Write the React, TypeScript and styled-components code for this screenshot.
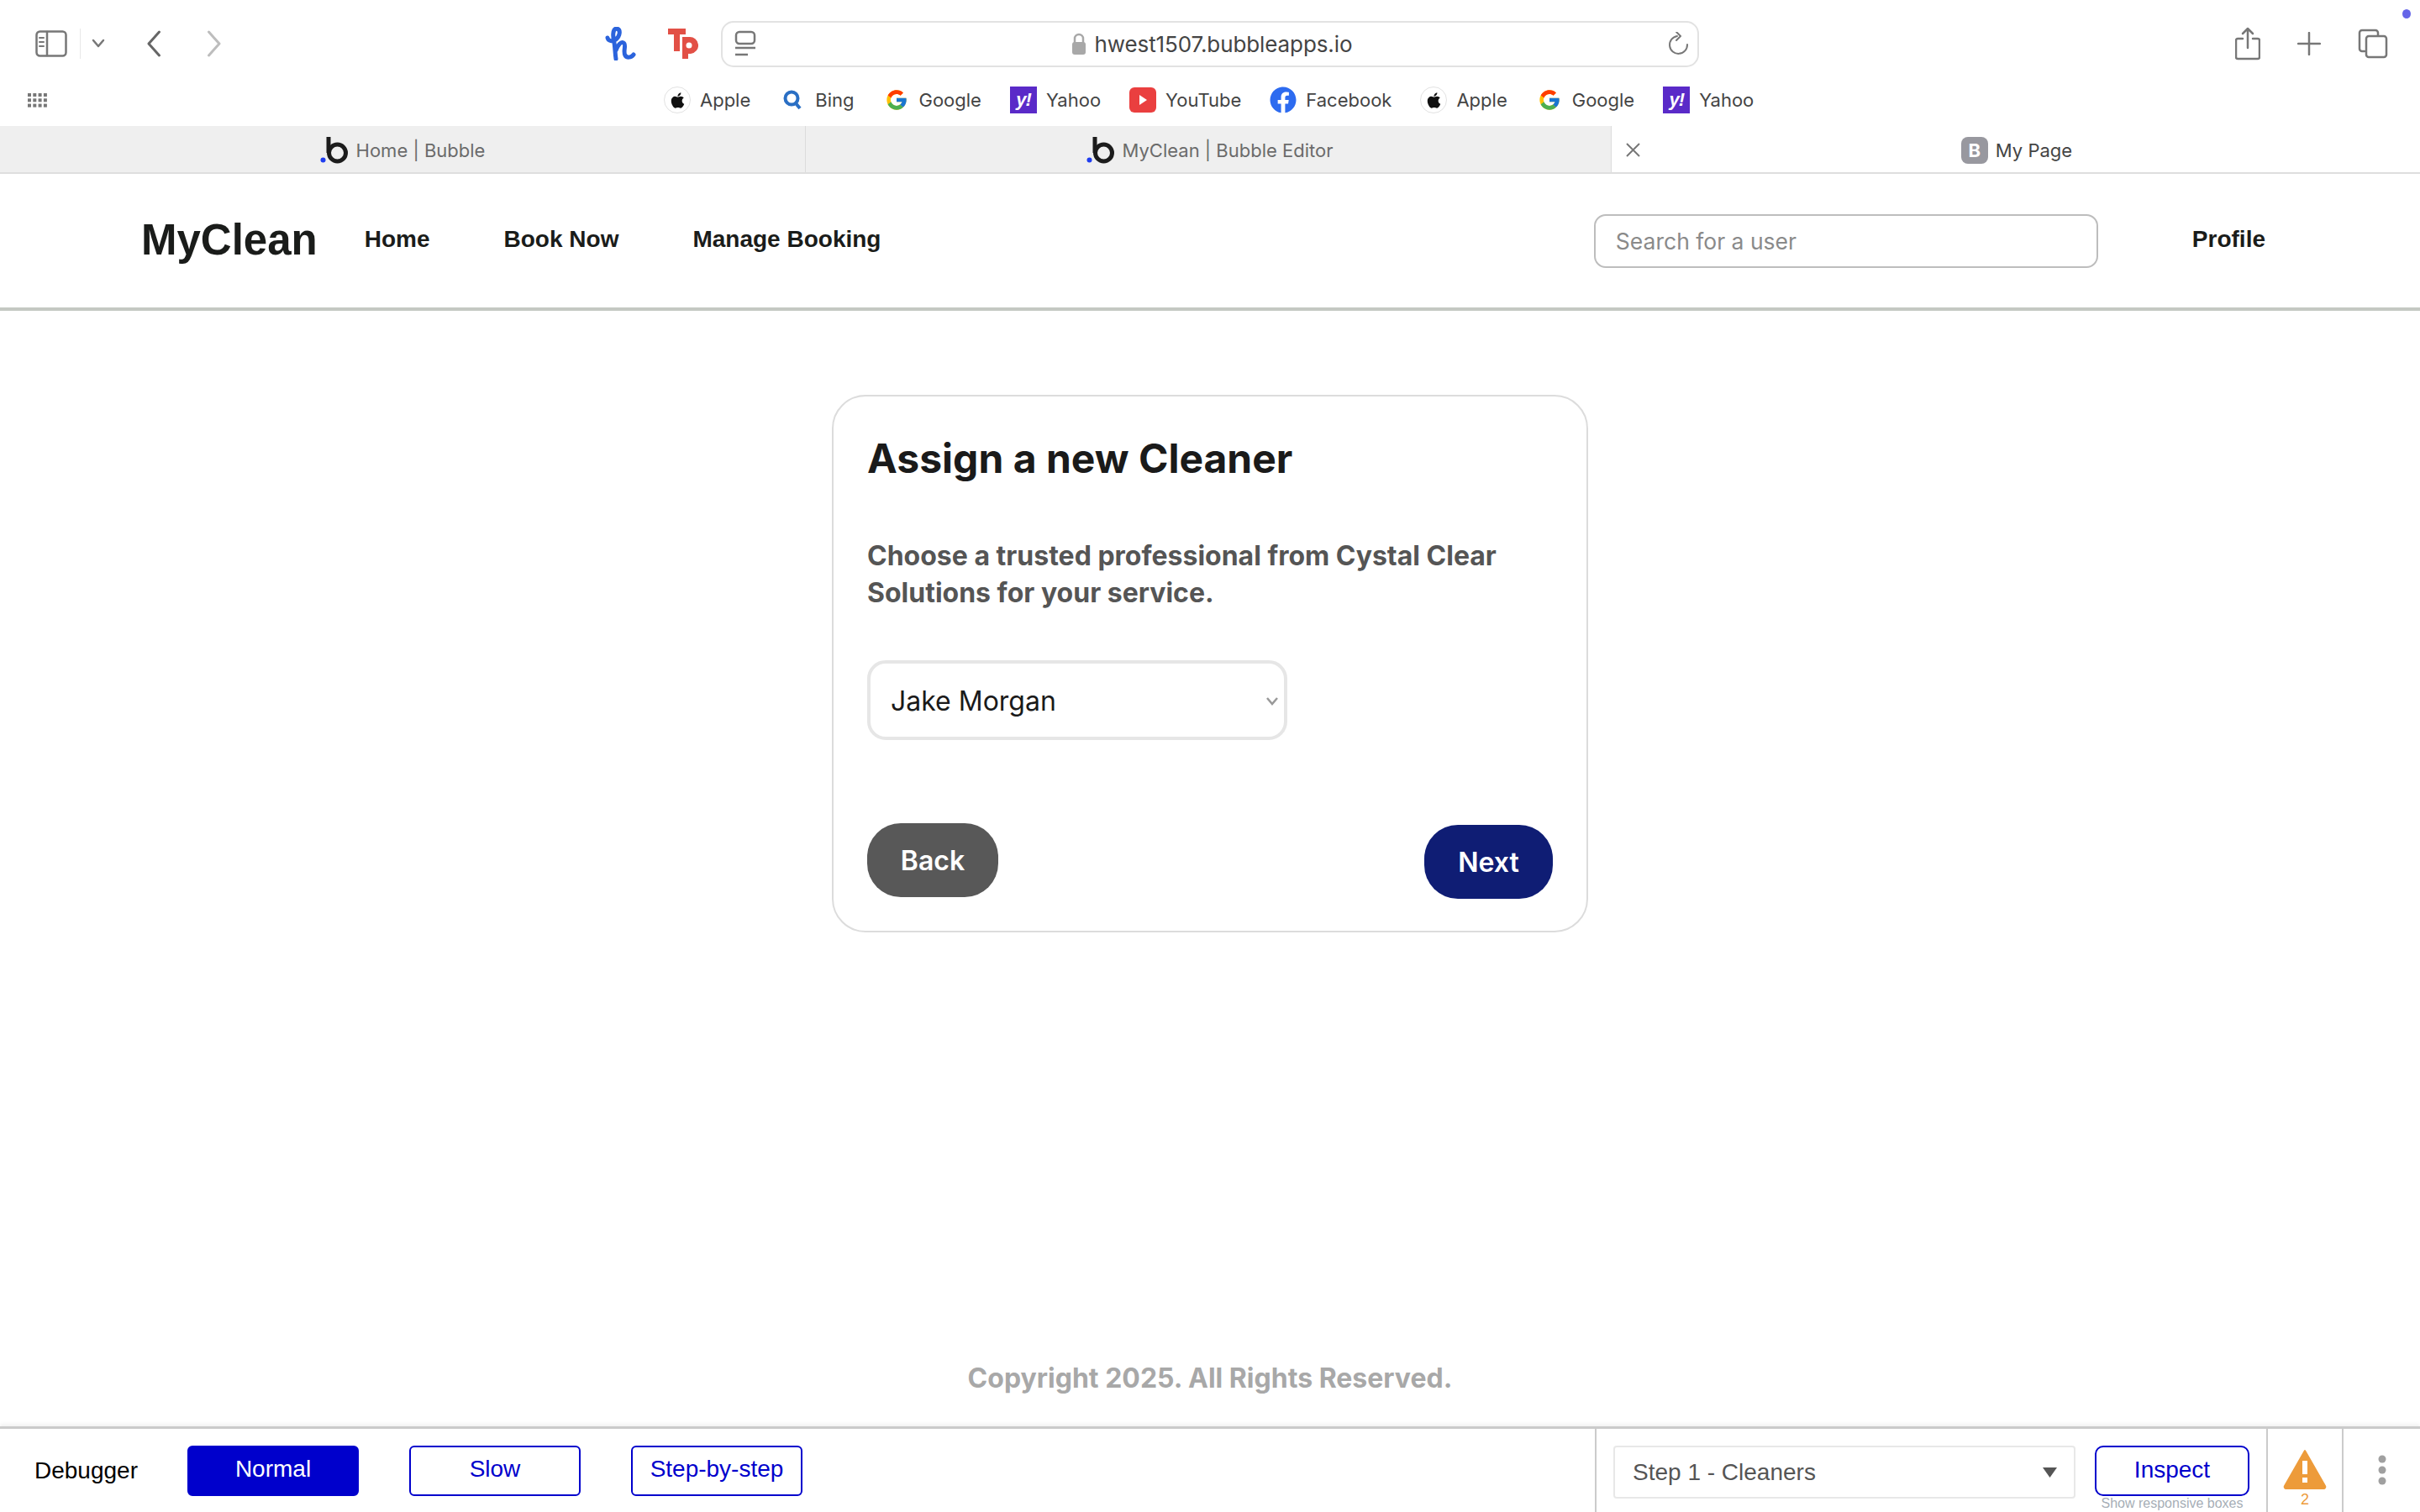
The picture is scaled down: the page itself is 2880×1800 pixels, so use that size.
import React from "react";
import styled, { createGlobalStyle } from "styled-components";
import { FaApple, FaFacebook } from "react-icons/fa";
import { FcGoogle } from "react-icons/fc";

const Global = createGlobalStyle`
  html, body { margin: 0; padding: 0; background: #fff; }
  * { box-sizing: border-box; }
`;

const Page = styled.div`
  position: relative;
  width: 2880px;
  height: 1800px;
  display: flex;
  flex-direction: column;
  overflow: hidden;
  background: #fff;
  font-family: Inter, "Liberation Sans", sans-serif;
`;

const Toolbar = styled.div`
  height: 104px;
  display: flex;
  align-items: center;
  padding-left: 42px;
`;
const NavGroup = styled.div`
  width: 660px;
  display: flex;
  align-items: center;
`;
const Divider = styled.span`
  width: 1px;
  height: 36px;
  background: #e8e8e8;
  margin: 0 13px 0 15px;
`;
const BackArrow = styled.svg`
  margin-left: 49px;
`;
const ForwardArrow = styled.svg`
  margin-left: 54px;
`;
const ExtGroup = styled.div`
  width: 138px;
  margin-left: 18px;
  display: flex;
  align-items: center;
  gap: 37px;
`;
const UrlBar = styled.div`
  width: 1164px;
  height: 55px;
  border: 2px solid #e2e2e2;
  border-radius: 15px;
  display: flex;
  align-items: center;
  justify-content: space-between;
  padding: 0 10px 0 14px;
`;
const UrlCenter = styled.div`
  display: flex;
  align-items: center;
  gap: 10px;
  font-size: 26px;
  color: #444;
  letter-spacing: -0.1px;
`;
const RightTools = styled.div`
  flex: 1;
  display: flex;
  justify-content: flex-end;
  align-items: center;
  gap: 44px;
  padding-right: 38px;
`;
const Dot = styled.span`
  position: absolute;
  left: 2859px;
  top: 11px;
  width: 10px;
  height: 11px;
  border-radius: 50%;
  background: #6565e8;
`;

const BookmarkRow = styled.div`
  height: 46px;
  padding: 0 0 16px 32px;
  display: flex;
  align-items: center;
`;
const Bookmarks = styled.div`
  margin-left: 732px;
  display: flex;
  align-items: center;
  gap: 34px;
`;
const Bookmark = styled.div`
  display: flex;
  align-items: center;
  gap: 11px;
  font-size: 22px;
  color: #444;
`;
const FavBox = styled.span`
  width: 32px;
  height: 32px;
  display: flex;
  align-items: center;
  justify-content: center;
`;
const AppleBadge = styled(FavBox)`
  border: 1px solid #e2e2e2;
  border-radius: 50%;
  color: #111;
  font-size: 21px;
`;
const YahooBadge = styled(FavBox)`
  background: #5a2ac8;
  color: #fff;
  font: italic 700 22px "Liberation Sans", sans-serif;
  letter-spacing: -1px;
`;

const Tabs = styled.div`
  height: 57px;
  display: grid;
  grid-template-columns: 959px 959px 1fr;
  border-bottom: 2px solid #dedede;
  box-shadow: inset 0 2px 2px -1px #d8d8d8;
`;
const Tab = styled.div<{ $active?: boolean }>`
  position: relative;
  display: flex;
  align-items: center;
  justify-content: center;
  gap: 9px;
  padding-top: 2px;
  font-size: 22px;
  color: ${(p) => (p.$active ? "#444" : "#6b6b6b")};
  background: ${(p) => (p.$active ? "#fff" : "#efefef")};
  border-right: 1px solid ${(p) => (p.$active ? "transparent" : "#dcdcdc")};
  & + & {
    padding-left: 3px;
  }
`;
const TabClose = styled.span`
  position: absolute;
  left: 17px;
  top: 20px;
  display: flex;
`;
const PageBadge = styled.span`
  width: 32px;
  height: 32px;
  border-radius: 8px;
  background: #98989f;
  color: #fff;
  font-size: 22px;
  font-weight: 700;
  display: flex;
  align-items: center;
  justify-content: center;
`;

const Header = styled.header`
  height: 163px;
  border-bottom: 4px solid #c4c8c2;
  display: flex;
  align-items: center;
  padding: 0 184px 3px 168px;
  font-family: "Liberation Sans", Arial, sans-serif;
  color: #1a1c1a;
`;
const Logo = styled.div`
  font-size: 51px;
  font-weight: 700;
  margin-right: 56px;
`;
const NavLink = styled.a`
  font-size: 28px;
  font-weight: 700;
  margin-right: 88px;
`;
const Search = styled.div`
  margin-left: auto;
  margin-top: 3px;
  width: 600px;
  height: 64px;
  border: 2px solid #bdbdbd;
  border-radius: 14px;
  display: flex;
  align-items: center;
  padding-left: 24px;
  font: 400 26.5px Inter, sans-serif;
  color: #8a8a8a;
`;
const Profile = styled(NavLink)`
  margin: 0 0 0 112px;
`;

const Main = styled.main`
  flex: 1;
  display: flex;
  justify-content: center;
  align-items: flex-start;
  padding-top: 100px;
`;
const Card = styled.section`
  width: 900px;
  height: 640px;
  border: 2px solid #dcdcdc;
  border-radius: 40px;
  padding: 44px 40px 0 40px;
  display: flex;
  flex-direction: column;
  color: #1a1a1a;
`;
const Title = styled.h1`
  margin: 0;
  font-size: 48px;
  font-weight: 700;
  line-height: 60px;
`;
const Lead = styled.p`
  margin: 64px 0 0;
  font-size: 32px;
  font-weight: 700;
  line-height: 44px;
  color: #555;
`;
const SelectBox = styled.div`
  margin-top: 58px;
  width: 500px;
  height: 95px;
  border: 4px solid #e6e6e6;
  border-radius: 22px;
  padding: 2px 6px 0 24px;
  display: flex;
  align-items: center;
  justify-content: space-between;
  font-size: 32px;
  color: #1a1a1a;
`;
const Actions = styled.div`
  margin-top: 99px;
  display: flex;
  justify-content: space-between;
  align-items: flex-start;
`;
const Pill = styled.button<{ $bg: string; $w: number; $top: number }>`
  width: ${(p) => p.$w}px;
  height: 88px;
  margin-top: ${(p) => p.$top}px;
  border: 0;
  border-radius: 40px;
  background: ${(p) => p.$bg};
  color: #fff;
  font: 600 32px Inter, sans-serif;
`;

const Copyright = styled.footer`
  height: 77px;
  display: flex;
  justify-content: center;
  font-size: 32px;
  font-weight: 700;
  color: #a8a8a8;
`;

const Debugger = styled.div`
  height: 102px;
  border-top: 3px solid #cbcbcb;
  box-shadow: 0 -3px 4px rgba(0, 0, 0, 0.05);
  display: flex;
  font-family: "Liberation Sans", Arial, sans-serif;
  background: #fff;
`;
const DebugLeft = styled.div`
  width: 1898px;
  padding-left: 41px;
  display: flex;
  align-items: center;
  gap: 60px;
`;
const DebugLabel = styled.span`
  width: 122px;
  font-size: 28px;
  color: #000;
`;
const ModeButton = styled.button<{ $on?: boolean }>`
  width: 204px;
  height: 60px;
  padding: 0 0 3px;
  border: 2px solid #0000cc;
  border-radius: 6px;
  background: ${(p) => (p.$on ? "#0000cc" : "#fff")};
  color: ${(p) => (p.$on ? "#fff" : "#0000cc")};
  font: 400 28px "Liberation Sans", Arial, sans-serif;
`;
const DebugRight = styled.div`
  flex: 1;
  border-left: 2px solid #cbcbcb;
  padding-left: 20px;
  display: flex;
  align-items: flex-start;
  padding-top: 20px;
  gap: 23px;
`;
const StepSelect = styled.div`
  width: 550px;
  height: 63px;
  flex-shrink: 0;
  border: 2px solid #e8e8e8;
  border-radius: 4px;
  padding: 0 20px 0 21px;
  display: flex;
  align-items: center;
  justify-content: space-between;
  font-size: 28px;
  color: #555;
`;
const InspectCol = styled.div`
  width: 184px;
  flex-shrink: 0;
  display: flex;
  flex-direction: column;
  align-items: center;
`;
const Inspect = styled(ModeButton)`
  width: 184px;
  border-radius: 10px;
`;
const Hint = styled.span`
  font-size: 16px;
  line-height: 18px;
  white-space: nowrap;
  color: #a6aeb6;
`;
const WarnCell = styled.div`
  width: 92px;
  height: 99px;
  flex-shrink: 0;
  margin: -20px 0 0 -3px;
  border-left: 2px solid #cbcbcb;
  border-right: 2px solid #cbcbcb;
  display: flex;
  flex-direction: column;
  align-items: center;
  padding-top: 24px;
  font-size: 18px;
  line-height: 24px;
  color: #ed9b3a;
`;
const MoreCell = styled.div`
  flex: 1;
  margin: -20px 0 0 -23px;
  padding-top: 31px;
  display: flex;
  justify-content: center;
`;

const Stroke = { fill: "none", stroke: "#777", strokeWidth: 2.5, strokeLinecap: "round", strokeLinejoin: "round" } as const;

const BubbleLogo = () => (
  <svg width="34" height="33" viewBox="0 0 34 33">
    <circle cx="3.5" cy="28.5" r="3" fill="#1f3df0" />
    <path d="M10 1v19" stroke="#1c1c1c" strokeWidth="5" fill="none" />
    <circle cx="20.5" cy="20" r="10" stroke="#1c1c1c" strokeWidth="5" fill="none" />
  </svg>
);
const Favorite = ({ label, children }: { label: string; children: React.ReactNode }) => (
  <Bookmark>
    {children}
    {label}
  </Bookmark>
);
const AppleIcon = () => <AppleBadge><FaApple /></AppleBadge>;
const GoogleIcon = () => <FavBox><FcGoogle size={28} /></FavBox>;
const YahooIcon = () => <YahooBadge>y!</YahooBadge>;

export default function App() {
  return (
    <Page>
      <Global />
      <Toolbar>
        <NavGroup>
          <svg width="38" height="32" viewBox="0 0 38 32">
            <rect x="1.5" y="1.5" width="35" height="29" rx="4" {...Stroke} />
            <path d="M14 2v28" {...Stroke} />
            <path d="M5 9h5M5 14h5M5 19h5" {...Stroke} strokeWidth="2" />
          </svg>
          <Divider />
          <svg width="16" height="12" viewBox="0 0 16 12">
            <path d="M2 2l6 7 6-7" {...Stroke} />
          </svg>
          <BackArrow width="18" height="32" viewBox="0 0 18 32">
            <path d="M15.500 2L3 16l12.500 14" {...Stroke} strokeWidth="3" stroke="#666" />
          </BackArrow>
          <ForwardArrow width="18" height="32" viewBox="0 0 18 32">
            <path d="M2.500 2L15 16 2.500 30" {...Stroke} strokeWidth="3" stroke="#bdbdbd" />
          </ForwardArrow>
        </NavGroup>
        <ExtGroup>
          <svg width="38" height="40" viewBox="0 0 38 40">
            <path d="M3 13c1 4 6 5 10 2 5-4 6-12 1-13-5 0-5 9-3 17 1 6 1 13 2 19M13 28c2-6 6-11 9-9 4 2-1 10 2 15 2 3 7 3 10-1" fill="none" stroke="#2b63dc" strokeWidth="5" strokeLinecap="round" strokeLinejoin="round" />
          </svg>
          <svg width="36" height="36" viewBox="0 0 36 36">
            <path d="M0 0h21v7h-7v20H7V7H0z" fill="#e25046" />
            <path d="M17 10h8a10 10 0 0 1 2 20h-3v6h-7z" fill="#e25046" />
            <circle cx="25" cy="20" r="3.500" fill="#fff" />
          </svg>
        </ExtGroup>
        <UrlBar>
          <svg width="26" height="32" viewBox="0 0 26 32">
            <rect x="2" y="2" width="22" height="14" rx="4" {...Stroke} />
            <path d="M1 21h24M1 29h15" {...Stroke} strokeLinecap="butt" />
          </svg>
          <UrlCenter>
            <svg width="18" height="26" viewBox="0 0 18 26">
              <path d="M4 12V7a5 5 0 0 1 10 0v5" fill="none" stroke="#a8a8a8" strokeWidth="2.500" />
              <rect x="1" y="11" width="16" height="15" rx="3" fill="#a8a8a8" />
            </svg>
            hwest1507.bubbleapps.io
          </UrlCenter>
          <svg width="26" height="28" viewBox="0 0 26 28">
            <path d="M12 5a10.500 10.500 0 1 0 12 10" {...Stroke} strokeWidth="2" />
            <path d="M11 0l5 5-5 5" {...Stroke} strokeWidth="2" />
          </svg>
        </UrlBar>
        <RightTools>
          <svg width="30" height="40" viewBox="0 0 30 40">
            <path d="M9 14H3a2 2 0 0 0-2 2v20a2 2 0 0 0 2 2h24a2 2 0 0 0 2-2V16a2 2 0 0 0-2-2h-6" {...Stroke} />
            <path d="M15 25V2M9 8l6-6 6 6" {...Stroke} />
          </svg>
          <svg width="28" height="28" viewBox="0 0 28 28">
            <path d="M14 1v26M1 14h26" {...Stroke} />
          </svg>
          <svg width="36" height="36" viewBox="0 0 36 36">
            <path d="M8 27H5a3 3 0 0 1-3-3V5a3 3 0 0 1 3-3h16a3 3 0 0 1 3 3v3" {...Stroke} />
            <rect x="10" y="9" width="24" height="25" rx="3" {...Stroke} />
          </svg>
        </RightTools>
        <Dot />
      </Toolbar>

      <BookmarkRow>
        <svg width="26" height="18" viewBox="0 0 26 18">
          <g fill="#777">
            {[0, 1, 2].map((r) =>
              [0, 1, 2, 3].map((c) => <rect key={`${r}${c}`} x={1 + c * 6.300} y={1 + r * 6.300} width="4" height="4" />)
            )}
          </g>
        </svg>
        <Bookmarks>
          <Favorite label="Apple"><AppleIcon /></Favorite>
          <Favorite label="Bing">
            <FavBox>
              <svg width="22" height="24" viewBox="0 0 22 24">
                <circle cx="10" cy="10" r="7.500" fill="none" stroke="#2a6fc4" strokeWidth="4" />
                <path d="M15 16l5 6" stroke="#2a6fc4" strokeWidth="4" />
              </svg>
            </FavBox>
          </Favorite>
          <Favorite label="Google"><GoogleIcon /></Favorite>
          <Favorite label="Yahoo"><YahooIcon /></Favorite>
          <Favorite label="YouTube">
            <FavBox>
              <svg width="32" height="30" viewBox="0 0 32 30">
                <rect width="32" height="30" rx="6" fill="#ea3f3f" />
                <path d="M12 9l9 6-9 6z" fill="#fff" />
              </svg>
            </FavBox>
          </Favorite>
          <Favorite label="Facebook">
            <FavBox><FaFacebook size={32} color="#2d6bf0" /></FavBox>
          </Favorite>
          <Favorite label="Apple"><AppleIcon /></Favorite>
          <Favorite label="Google"><GoogleIcon /></Favorite>
          <Favorite label="Yahoo"><YahooIcon /></Favorite>
        </Bookmarks>
      </BookmarkRow>

      <Tabs>
        <Tab><BubbleLogo />Home | Bubble</Tab>
        <Tab><BubbleLogo />MyClean | Bubble Editor</Tab>
        <Tab $active>
          <TabClose>
            <svg width="17" height="17" viewBox="0 0 17 17">
              <path d="M1 1l15 15M16 1L1 16" stroke="#777" strokeWidth="2" />
            </svg>
          </TabClose>
          <PageBadge>B</PageBadge>My Page
        </Tab>
      </Tabs>

      <Header>
        <Logo>MyClean</Logo>
        <NavLink>Home</NavLink>
        <NavLink>Book Now</NavLink>
        <NavLink>Manage Booking</NavLink>
        <Search>Search for a user</Search>
        <Profile>Profile</Profile>
      </Header>

      <Main>
        <Card>
          <Title>Assign a new Cleaner</Title>
          <Lead>Choose a trusted professional from Cystal Clear Solutions for your service.</Lead>
          <SelectBox>
            Jake Morgan
            <svg width="16" height="12" viewBox="0 0 16 12">
              <path d="M2 2l6 7 6-7" fill="none" stroke="#999" strokeWidth="2.500" />
            </svg>
          </SelectBox>
          <Actions>
            <Pill $bg="#585858" $w={156} $top={0}>Back</Pill>
            <Pill $bg="#0f1d74" $w={153} $top={2}>Next</Pill>
          </Actions>
        </Card>
      </Main>

      <Copyright>Copyright 2025. All Rights Reserved.</Copyright>

      <Debugger>
        <DebugLeft>
          <DebugLabel>Debugger</DebugLabel>
          <ModeButton $on>Normal</ModeButton>
          <ModeButton>Slow</ModeButton>
          <ModeButton>Step-by-step</ModeButton>
        </DebugLeft>
        <DebugRight>
          <StepSelect>
            Step 1 - Cleaners
            <svg width="17" height="12" viewBox="0 0 17 12">
              <path d="M0 0h17l-8.500 12z" fill="#555" />
            </svg>
          </StepSelect>
          <InspectCol>
            <Inspect>Inspect</Inspect>
            <Hint>Show responsive boxes</Hint>
          </InspectCol>
          <WarnCell>
            <svg width="52" height="48" viewBox="0 0 52 48">
              <path d="M26 2L50 44a2 2 0 0 1-2 3H4a2 2 0 0 1-2-3z" fill="#ed9b3a" stroke="#ed9b3a" strokeWidth="2" strokeLinejoin="round" />
              <rect x="23" y="14" width="6" height="16" fill="#fff" />
              <rect x="23" y="34" width="6" height="6" fill="#fff" />
            </svg>
            2
          </WarnCell>
          <MoreCell>
            <svg width="10" height="36" viewBox="0 0 10 36">
              <circle cx="5" cy="5" r="4.500" fill="#a0a0a0" />
              <circle cx="5" cy="18" r="4.500" fill="#a0a0a0" />
              <circle cx="5" cy="31" r="4.500" fill="#a0a0a0" />
            </svg>
          </MoreCell>
        </DebugRight>
      </Debugger>
    </Page>
  );
}
